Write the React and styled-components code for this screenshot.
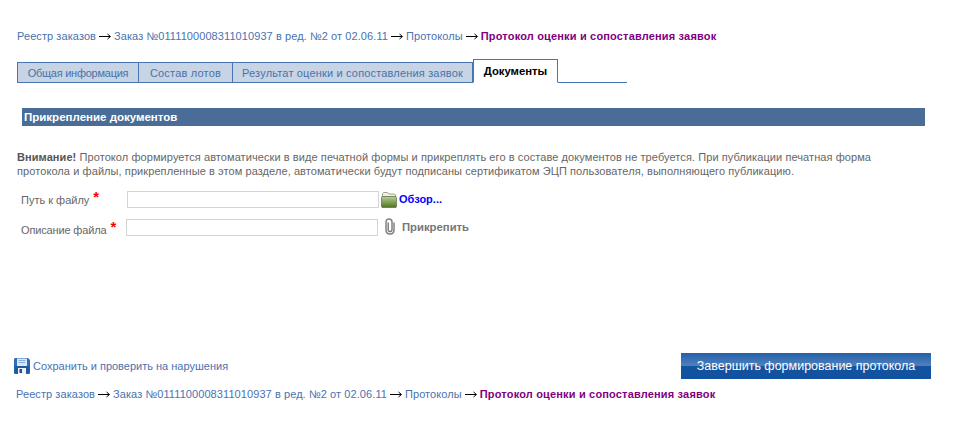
import React from 'react';
import styled, { createGlobalStyle } from 'styled-components';

const GlobalStyle = createGlobalStyle`
  html, body {
    margin: 0;
    padding: 0;
    background: #fff;
    font-family: "Liberation Sans", Arial, sans-serif;
    font-size: 11px;
  }
`;

const Page = styled.div`
  width: 957px;
  height: 422px;
  display: flex;
  flex-direction: column;
  overflow: hidden;
`;

const Crumbs = styled.div`
  display: flex;
  align-items: center;
  height: 14px;
  margin: ${(p) => p.$margin};
  white-space: nowrap;
  font-size: 11px;
`;

const CrumbLink = styled.a`
  color: #4a72b0;
  letter-spacing: 0.08px;
`;

const CrumbCurrent = styled.b`
  color: #800080;
  letter-spacing: 0.17px;
`;

const ArrowSvg = styled.svg`
  margin: 1px 3px 0 3px;
`;

const Arrow = () => (
  <ArrowSvg width="12" height="7" viewBox="0 0 12 7">
    <path d="M0 3.5H11M8.5 1L11.5 3.5L8.5 6" fill="none" stroke="#000" strokeWidth="1" />
  </ArrowSvg>
);

const TabBar = styled.div`
  display: flex;
  align-items: flex-end;
  height: 23px;
  margin: 16px 0 0 17px;
  width: 610px;
  border-bottom: 1px solid #4a76b0;
`;

const Tab = styled.div`
  width: ${(p) => p.$width}px;
  height: 21px;
  box-sizing: border-box;
  margin-bottom: -1px;
  display: flex;
  align-items: center;
  justify-content: center;
  border: 1px solid #4a76b0;
  border-left-width: ${(p) => (p.$first ? '1px' : '0')};
  background: #c6d4e6;
  color: #4a72a8;
  font-size: 11px;
  letter-spacing: ${(p) => p.$spacing}px;
`;

const ActiveTab = styled.div`
  width: 85px;
  height: 24px;
  box-sizing: border-box;
  margin-bottom: -1px;
  display: flex;
  align-items: center;
  justify-content: center;
  border: 1px solid #4a76b0;
  border-bottom-color: #fff;
  background: #fff;
  color: #000;
  font-size: 11.3px;
  font-weight: bold;
`;

const SectionTitle = styled.div`
  margin: 25px 32px 0 22px;
  height: 18px;
  padding-left: 2px;
  display: flex;
  align-items: center;
  background: #4a6d98;
  color: #fff;
  font-size: 11.5px;
  font-weight: bold;
`;

const Notice = styled.p`
  margin: 24px 0 0 17px;
  width: 880px;
  font-size: 11px;
  line-height: 14px;
  letter-spacing: 0.08px;
  color: #666;
  b {
    color: #555;
  }
`;

const FormRow = styled.div`
  display: flex;
  align-items: center;
  height: 18px;
  margin: ${(p) => p.$margin};
`;

const Label = styled.label`
  width: ${(p) => p.$width}px;
  flex: none;
  position: relative;
  top: ${(p) => p.$shift}px;
  color: #666;
  font-size: 11px;
  letter-spacing: ${(p) => p.$spacing}px;
`;

const Star = styled.span`
  color: #f00;
  font-size: 15px;
  font-weight: bold;
  margin-left: 4px;
  position: relative;
  top: -2px;
  line-height: 1;
`;

const Field = styled.input`
  width: 252px;
  height: 17px;
  box-sizing: border-box;
  padding: 0;
  border: 1px solid #d4d4d4;
  background: #fff;
  outline: none;
`;

const BrowseLink = styled.a`
  margin-left: 2px;
  color: #00f;
  font-size: 11px;
  font-weight: bold;
`;

const AttachText = styled.span`
  margin-left: 6px;
  color: #777;
  font-size: 11.3px;
  font-weight: bold;
`;

const ClipIcon = styled.svg`
  margin-left: 6px;
  margin-top: -2px;
`;

const FolderIcon = styled.svg`
  margin: 2px 0 0 2px;
`;

const Spacer = styled.div`
  flex: 1;
`;

const ActionRow = styled.div`
  display: flex;
  align-items: center;
  justify-content: space-between;
  height: 26px;
  margin: 0 26px 0 14px;
`;

const SaveLink = styled.a`
  display: flex;
  align-items: center;
  gap: 3px;
  color: #4a72b0;
  font-size: 11px;
`;

const FinishButton = styled.button`
  width: 250px;
  height: 26px;
  padding: 0;
  border: 0;
  color: #fff;
  font-family: inherit;
  font-size: 12.5px;
  background: linear-gradient(to bottom, #2360ab 0%, #4f80bb 48%, #14539f 52%, #11519f 100%);
`;

const crumbs = (
  <>
    <CrumbLink>Реестр заказов</CrumbLink>
    <Arrow />
    <CrumbLink>Заказ №0111100008311010937 в ред. №2 от 02.06.11</CrumbLink>
    <Arrow />
    <CrumbLink>Протоколы</CrumbLink>
    <Arrow />
    <CrumbCurrent>Протокол оценки и сопоставления заявок</CrumbCurrent>
  </>
);

const App = () => (
  <Page>
    <GlobalStyle />
    <Crumbs $margin="29px 0 0 17px">{crumbs}</Crumbs>
    <TabBar>
      <Tab $first $width={122} $spacing={-0.25}>Общая информация</Tab>
      <Tab $width={94} $spacing={0.2}>Состав лотов</Tab>
      <Tab $width={240} $spacing={0.17}>Результат оценки и сопоставления заявок</Tab>
      <ActiveTab>Документы</ActiveTab>
    </TabBar>
    <SectionTitle>Прикрепление документов</SectionTitle>
    <Notice>
      <b>Внимание!</b> Протокол формируется автоматически в виде печатной формы и прикреплять его в составе документов не требуется. При публикации печатная форма протокола и файлы, прикрепленные в этом разделе, автоматически будут подписаны сертификатом ЭЦП пользователя, выполняющего публикацию.
    </Notice>
    <FormRow $margin="12px 0 0 21px">
      <Label $width={106} $shift={-1} $spacing={0}>Путь к файлу<Star>*</Star></Label>
      <Field />
      <FolderIcon width="16" height="16" viewBox="0 0 16 16">
        <defs>
          <linearGradient id="fold" x1="0" y1="0" x2="0" y2="1">
            <stop offset="0" stopColor="#b9cf96" />
            <stop offset="1" stopColor="#4f7420" />
          </linearGradient>
        </defs>
        <path d="M1.5 5V1.5L2.5 0.5H6.5L8 2H13.5L14.5 3V5Z" fill="#f0efe6" stroke="#8c8c80" strokeWidth="0.8" />
        <path d="M0.5 5.5L1 4.5H15L15.5 5.5V14.5L15 15.5H1L0.5 14.5Z" fill="url(#fold)" stroke="#56703a" strokeWidth="0.7" />
      </FolderIcon>
      <BrowseLink>Обзор...</BrowseLink>
    </FormRow>
    <FormRow $margin="10px 0 0 21px">
      <Label $width={105} $shift={1} $spacing={-0.15}>Описание файла<Star>*</Star></Label>
      <Field />
      <ClipIcon width="12" height="17" viewBox="0 0 12 17">
        <path d="M10 4.5V12C10 14.8 8.5 16 6 16S2 14.8 2 12V4C2 2.2 3.2 1 5 1S8 2.2 8 4V11.5C8 12.8 7.2 13.6 6 13.6S4.2 12.8 4.2 11.5V4.5" fill="none" stroke="#808080" strokeWidth="1.5" />
      </ClipIcon>
      <AttachText>Прикрепить</AttachText>
    </FormRow>
    <Spacer />
    <ActionRow>
      <SaveLink>
        <svg width="16" height="16" viewBox="0 0 16 16">
          <path d="M1 0H14L16 2V15L15 16H1L0 15V1Z" fill="#2f6db6" />
          <path d="M0.5 8H15.5V15.5H0.5Z" fill="#1f5aa0" />
          <rect x="3" y="0.5" width="10" height="7.5" fill="#d8e8f8" />
          <path d="M4.5 2.5H11.5M4.5 4.5H11.5" stroke="#8fb0d4" strokeWidth="1" />
          <rect x="4" y="10" width="8" height="6" fill="#eef2f6" />
          <rect x="5.5" y="11" width="2.5" height="4" fill="#1f4f8c" />
        </svg>
        Сохранить и проверить на нарушения
      </SaveLink>
      <FinishButton>Завершить формирование протокола</FinishButton>
    </ActionRow>
    <Crumbs $margin="8px 0 21px 16px">{crumbs}</Crumbs>
  </Page>
);

export default App;
